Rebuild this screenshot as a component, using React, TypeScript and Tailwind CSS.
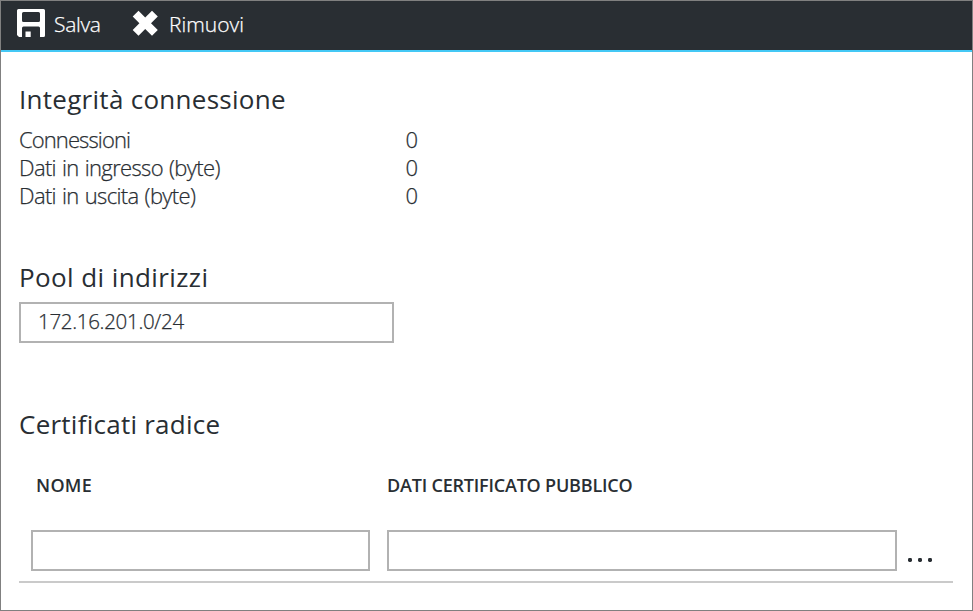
import type { ReactNode } from "react";

const stats = [
  { label: "Connessioni", value: "0", tracking: "tracking-[-0.9px]" },
  { label: "Dati in ingresso (byte)", value: "0", tracking: "tracking-[-0.65px] [word-spacing:1px]" },
  { label: "Dati in uscita (byte)", value: "0", tracking: "tracking-[-0.65px] [word-spacing:1px]" },
];

function SaveIcon() {
  return (
    <svg width="28" height="28" viewBox="0 0 28 28" aria-hidden="true">
      <path
        fill="#fff"
        fillRule="evenodd"
        d="M1.5 0H26.5Q28 0 28 1.5V26.5Q28 28 26.5 28H23V19Q23 17.5 21.5 17.5H6.5Q5 17.5 5 19V28H2L0 26V1.5Q0 0 1.5 0ZM6.5 3Q5 3 5 4.5V11.5Q5 13 6.5 13H21.5Q23 13 23 11.5V4.5Q23 3 21.5 3ZM8.5 22.5H13.7V28H8.5Z"
      />
    </svg>
  );
}

function RemoveIcon() {
  return (
    <svg width="26" height="26" viewBox="0 0 26 26" aria-hidden="true">
      <path
        fill="#fff"
        d="M6.5 0.8 13.2 7.5 20 0.8 25.8 6.6 19 13.3 25.8 20 20 25.8 13.2 19 6.5 25.8 0.7 20 7.4 13.3 0.7 6.6Z"
      />
    </svg>
  );
}

function Heading({ children, className }: { children: ReactNode; className: string }) {
  return <h2 className={`text-[26px] leading-9 whitespace-nowrap font-normal ${className}`}>{children}</h2>;
}

export default function App() {
  return (
    <div className="flex h-[611px] w-[973px] flex-col overflow-hidden border border-[#808080] bg-white font-['Open_Sans','Noto_Sans',sans-serif] text-[#292e33]">
      <header className="flex h-[51px] shrink-0 items-center border-b-2 border-[#44c8f5] bg-[#292e33] pb-[5px] pl-4 text-[21px] font-light text-white [-webkit-text-stroke:0.25px]">
        <button className="flex h-7 items-center gap-[9px]">
          <SaveIcon />
          <span className="w-[78px] pt-[3px] text-left tracking-[-0.3px]">Salva</span>
        </button>
        <button className="flex h-7 items-center gap-[11px]">
          <RemoveIcon />
          <span className="pt-[3px] tracking-[0px]">Rimuovi</span>
        </button>
      </header>
      <main className="flex flex-col px-[18px]">
        <section className="pt-[29px]">
          <Heading className="tracking-[0.28px]">Integrità connessione</Heading>
          <dl className="mt-2 text-[22px] leading-7 font-light [-webkit-text-stroke:0.25px]">
            {stats.map((s) => (
              <div key={s.label} className="flex h-7">
                <dt className={`w-[387px] whitespace-nowrap ${s.tracking}`}>{s.label}</dt>
                <dd className="-ml-[0.5px]">{s.value}</dd>
              </div>
            ))}
          </dl>
        </section>
        <section className="pt-[50px]">
          <Heading className="tracking-[0.4px]">Pool di indirizzi</Heading>
          <input
            className="mt-[7px] block h-[41px] w-[375px] border-2 border-[#b2b2b2] pb-[3px] pl-[17px] text-[20.5px] font-light tracking-[-0.3px] outline-none [-webkit-text-stroke:0.25px]"
            defaultValue="172.16.201.0/24"
          />
        </section>
        <section className="pt-[63px]">
          <Heading className="tracking-[0.25px]">Certificati radice</Heading>
          <div className="mt-[29px] flex h-7 pl-[17px] text-[18px] leading-7 font-semibold whitespace-nowrap">
            <span className="w-[351px] tracking-[0.3px]">NOME</span>
            <span className="tracking-[-0.2px]">DATI CERTIFICATO PUBBLICO</span>
          </div>
          <div className="mt-[31px] flex h-[53px] w-[934px] border-b-2 border-[#cacaca] pl-3">
            <input className="h-[41px] w-[339px] border-2 border-[#b2b2b2] outline-none" />
            <input className="ml-[17px] h-[41px] w-[510px] border-2 border-[#b2b2b2] outline-none" />
            <button className="mt-7 ml-[11px] flex h-1 gap-[6px]" aria-label="Altro">
              <span className="size-1 rounded-[1.4px] bg-[#292e33]" />
              <span className="size-1 rounded-[1.4px] bg-[#292e33]" />
              <span className="size-1 rounded-[1.4px] bg-[#292e33]" />
            </button>
          </div>
        </section>
      </main>
    </div>
  );
}
